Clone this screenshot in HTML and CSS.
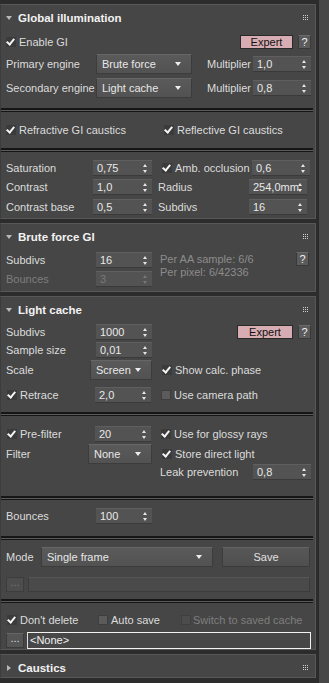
FILE: index.html
```html
<!DOCTYPE html>
<html>
<head>
<meta charset="utf-8">
<link rel="stylesheet" href="styles.css">
</head>
<body>
<div class="app">
  <div class="panel">
    <section class="rollout r1">
      <div class="rhead"><span class="tri"></span><span class="title">Global illumination</span><svg class="grip" width="5" height="5" viewBox="0 0 5 5"><g fill="#d0d0d0"><rect x="0" y="0" width="1" height="1"/><rect x="2" y="0" width="1" height="1"/><rect x="4" y="0" width="1" height="1"/><rect x="0" y="2" width="1" height="1"/><rect x="2" y="2" width="1" height="1"/><rect x="4" y="2" width="1" height="1"/><rect x="0" y="4" width="1" height="1"/><rect x="2" y="4" width="1" height="1"/><rect x="4" y="4" width="1" height="1"/></g></svg></div>
      <div class="row h16 mt5">
        <span class="chk on"></span><span class="txt w-en">Enable GI</span>
        <span class="btn expert e1">Expert</span><span class="btn q">?</span>
      </div>
      <div class="row h21 mt3">
        <span class="txt w90">Primary engine</span>
        <span class="dd w96">Brute force<i class="arr"></i></span>
        <span class="txt w46 ml15">Multiplier</span>
        <span class="sp w58">1,0<i class="spa"></i></span>
      </div>
      <div class="row h21 mt3">
        <span class="txt w90">Secondary engine</span>
        <span class="dd w96">Light cache<i class="arr"></i></span>
        <span class="txt w46 ml15">Multiplier</span>
        <span class="sp w58">0,8<i class="spa"></i></span>
      </div>
      <div class="sep s1"></div>
      <div class="row h16">
        <span class="chk on"></span><span class="txt w145">Refractive GI caustics</span>
        <span class="chk on"></span><span class="txt">Reflective GI caustics</span>
      </div>
      <div class="sep s2"></div>
      <div class="row h19">
        <span class="txt w87">Saturation</span>
        <span class="sp w59">0,75<i class="spa"></i></span>
        <span class="chk on ml10"></span><span class="txt w77">Amb. occlusion</span>
        <span class="sp w58">0,6<i class="spa"></i></span>
      </div>
      <div class="row h19">
        <span class="txt w87">Contrast</span>
        <span class="sp w59">1,0<i class="spa"></i></span>
        <span class="txt w91 ml6">Radius</span>
        <span class="sp w58">254,0mm<i class="spa"></i></span>
      </div>
      <div class="row h19 mt1">
        <span class="txt w87">Contrast base</span>
        <span class="sp w59">0,5<i class="spa"></i></span>
        <span class="txt w91 ml6">Subdivs</span>
        <span class="sp w58">16<i class="spa"></i></span>
      </div>
    </section>

    <section class="rollout r2">
      <div class="rhead"><span class="tri"></span><span class="title">Brute force GI</span><svg class="grip" width="5" height="5" viewBox="0 0 5 5"><g fill="#d0d0d0"><rect x="0" y="0" width="1" height="1"/><rect x="2" y="0" width="1" height="1"/><rect x="4" y="0" width="1" height="1"/><rect x="0" y="2" width="1" height="1"/><rect x="2" y="2" width="1" height="1"/><rect x="4" y="2" width="1" height="1"/><rect x="0" y="4" width="1" height="1"/><rect x="2" y="4" width="1" height="1"/><rect x="4" y="4" width="1" height="1"/></g></svg></div>
      <div class="bf mt3">
        <div class="bfl">
          <div class="row h17">
            <span class="txt w90">Subdivs</span>
            <span class="sp w56">16<i class="spa"></i></span>
          </div>
          <div class="row h17 mt2 dis">
            <span class="txt w90">Bounces</span>
            <span class="sp w56">3<i class="spa"></i></span>
          </div>
        </div>
        <div class="info">
          <div>Per AA sample: 6/6</div>
          <div>Per pixel: 6/42336</div>
        </div>
        <span class="btn q q2">?</span>
      </div>
    </section>

    <section class="rollout r3">
      <div class="rhead"><span class="tri"></span><span class="title">Light cache</span><svg class="grip" width="5" height="5" viewBox="0 0 5 5"><g fill="#d0d0d0"><rect x="0" y="0" width="1" height="1"/><rect x="2" y="0" width="1" height="1"/><rect x="4" y="0" width="1" height="1"/><rect x="0" y="2" width="1" height="1"/><rect x="2" y="2" width="1" height="1"/><rect x="4" y="2" width="1" height="1"/><rect x="0" y="4" width="1" height="1"/><rect x="2" y="4" width="1" height="1"/><rect x="4" y="4" width="1" height="1"/></g></svg></div>
      <div class="row h17 mt2">
        <span class="txt w90">Subdivs</span>
        <span class="sp w56">1000<i class="spa"></i></span>
        <span class="btn expert e2">Expert</span><span class="btn q">?</span>
      </div>
      <div class="row h17 mt1">
        <span class="txt w90">Sample size</span>
        <span class="sp w56">0,01<i class="spa"></i></span>
      </div>
      <div class="row h21 mt1">
        <span class="txt w84">Scale</span>
        <span class="dd w62">Screen<i class="arr"></i></span>
        <span class="chk on ml10"></span><span class="txt">Show calc. phase</span>
      </div>
      <div class="row h17 mt6">
        <span class="chk on ml1"></span><span class="txt w75">Retrace</span>
        <span class="sp w56">2,0<i class="spa"></i></span>
        <span class="chk off ml10"></span><span class="txt">Use camera path</span>
      </div>
      <div class="sep s3"></div>
      <div class="row h17">
        <span class="chk on ml1"></span><span class="txt w75">Pre-filter</span>
        <span class="sp w56">20<i class="spa"></i></span>
        <span class="chk on ml10"></span><span class="txt">Use for glossy rays</span>
      </div>
      <div class="row h19 mt2">
        <span class="txt w82">Filter</span>
        <span class="dd w64">None<i class="arr"></i></span>
        <span class="chk on ml10"></span><span class="txt">Store direct light</span>
      </div>
      <div class="row h17">
        <span class="txt w154"></span>
        <span class="txt w93">Leak prevention</span>
        <span class="sp w58">0,8<i class="spa"></i></span>
      </div>
      <div class="sep s4"></div>
      <div class="row h17">
        <span class="txt w90">Bounces</span>
        <span class="sp w56">100<i class="spa"></i></span>
      </div>
      <div class="sep s5"></div>
      <div class="row h20">
        <span class="txt w35">Mode</span>
        <span class="dd w172">Single frame<i class="arr"></i></span>
        <span class="btn save">Save</span>
      </div>
      <div class="row h15 mt10">
        <span class="btn dots dimb">...</span>
        <span class="field dimf"></span>
      </div>
      <div class="sep s6"></div>
      <div class="row h16">
        <span class="chk on ml1"></span><span class="txt w78">Don't delete</span>
        <span class="chk off"></span><span class="txt w70">Auto save</span>
        <span class="chk off dchk"></span><span class="txt dis">Switch to saved cache</span>
      </div>
      <div class="row h17 mt4">
        <span class="btn dots">...</span>
        <span class="field none">&lt;None&gt;</span>
      </div>
    </section>

    <section class="rollout r4 closed">
      <div class="rhead"><span class="tri right"></span><span class="title">Caustics</span><svg class="grip" width="5" height="5" viewBox="0 0 5 5"><g fill="#d0d0d0"><rect x="0" y="0" width="1" height="1"/><rect x="2" y="0" width="1" height="1"/><rect x="4" y="0" width="1" height="1"/><rect x="0" y="2" width="1" height="1"/><rect x="2" y="2" width="1" height="1"/><rect x="4" y="2" width="1" height="1"/><rect x="0" y="4" width="1" height="1"/><rect x="2" y="4" width="1" height="1"/><rect x="4" y="4" width="1" height="1"/></g></svg></div>
    </section>
  </div>
  <div class="scroll"></div>
</div>
</body>
</html>
```
FILE: styles.css
```css
* { box-sizing: border-box; }
html, body { margin: 0; padding: 0; }
body {
  background: #2b2b2b;
  width: 329px;
  height: 683px;
  overflow: hidden;
  font-family: "Liberation Sans", Arial, sans-serif;
  font-size: 11px;
  color: #dcdcdc;
}
.app { display: flex; height: 683px; }
.panel {
  width: 318px;
  background: #2c2c2c;
  padding: 4px 2px 0 0;
  display: flex;
  flex-direction: column;
  gap: 4px;
}
.scroll {
  width: 11px;
  background: #474747;
  border-left: 1px solid #2a2a2a;
}
.rollout {
  background: #464646;
  border: 1px solid #575757;
  border-left: 1px solid #3c3c3c;
  padding: 0 0 0 5px;
  flex: none;
}
.rhead {
  height: 24px;
  display: flex;
  align-items: center;
  position: relative;
  margin-left: -5px;
  padding-left: 5px;
  padding-top: 1px;
}
.tri {
  width: 0; height: 0;
  border-left: 3px solid transparent;
  border-right: 3px solid transparent;
  border-top: 4px solid #b8b8b8;
  margin-right: 6px;
}
.tri.right {
  border-top: 3px solid transparent;
  border-bottom: 3px solid transparent;
  border-left: 4px solid #b8b8b8;
  border-right: 0;
  margin-left: 1px;
  margin-right: 7px;
}
.title { font-weight: bold; font-size: 11.5px; color: #f2f2f2; }
.grip {
  position: absolute;
  right: 7px; top: 10px;
}
.row { display: flex; align-items: center; }
.h15 { height: 15px; } .h16 { height: 16px; } .h17 { height: 17px; }
.h19 { height: 19px; } .h20 { height: 20px; } .h21 { height: 21px; }
.mt1 { margin-top: 1px; } .mt2 { margin-top: 2px; } .mt3 { margin-top: 3px; } .mt4 { margin-top: 4px; }
.mt5 { margin-top: 5px; } .mt6 { margin-top: 6px; } .mt10 { margin-top: 10px; }
.ml1 { margin-left: 1px; } .ml6 { margin-left: 6px; } .ml10 { margin-left: 10px; } .ml15 { margin-left: 15px; }
.txt { white-space: nowrap; flex: none; }
.w35 { width: 35px; } .w46 { width: 46px; } .w56 { width: 56px; } .w58 { width: 58px; }
.w59 { width: 59px; } .w62 { width: 62px; } .w64 { width: 64px; } .w70 { width: 70px; }
.w75 { width: 75px; } .w77 { width: 77px; } .w78 { width: 78px; } .w82 { width: 82px; }
.w84 { width: 84px; } .w87 { width: 87px; } .w90 { width: 90px; } .w91 { width: 91px; }
.w93 { width: 93px; } .w96 { width: 96px; } .w145 { width: 145px; } .w154 { width: 154px; }
.w172 { width: 172px; } .w-en { width: 221px; }

.chk {
  width: 10px; height: 10px;
  flex: none;
  margin-right: 3px;
  position: relative;
}
.chk.on { background: #3b3b3b; }
.chk.on::after {
  content: "";
  position: absolute;
  left: 2px; top: 0px;
  width: 3px; height: 6px;
  border-right: 2px solid #f4f4f4;
  border-bottom: 2px solid #f4f4f4;
  transform: rotate(40deg);
}
.chk.off { background: #5b5b5b; border: 1px solid #3e3e3e; }
.chk.dchk { background: #4c4c4c; border: 1px solid #3f3f3f; margin-right: 2px; }
.dis { color: #7e7e7e; }

.sp, .dd {
  position: relative;
  flex: none;
  height: 16px;
  line-height: 15px;
  padding-left: 4px;
  background: #535353;
  border-top: 1px solid #5f5f5f;
  border-bottom: 1px solid #3a3a3a;
  color: #e8e8e8;
  overflow: hidden;
}
.dd {
  height: 20px;
  line-height: 18px;
  padding-left: 5px;
  background: linear-gradient(#5a5a5a, #525252);
  border: 1px solid #3c3c3c;
  border-top-color: #666;
}
.arr {
  position: absolute;
  right: 10px; top: 7px;
  width: 0; height: 0;
  border-left: 3px solid transparent;
  border-right: 3px solid transparent;
  border-top: 4px solid #eee;
}
.spa {
  position: absolute;
  right: 4px; top: 3px;
  width: 5px; height: 9px;
}
.spa::before, .spa::after {
  content: "";
  position: absolute;
  left: 0;
  border-left: 2.5px solid transparent;
  border-right: 2.5px solid transparent;
}
.spa::before { top: 0; border-bottom: 3px solid #e6e6e6; }
.spa::after { bottom: 0; border-top: 3px solid #e6e6e6; }
.dis .sp { color: #7a7a7a; }
.dis .spa::before { border-bottom-color: #777; }
.dis .spa::after { border-top-color: #777; }

.btn {
  flex: none;
  display: flex;
  align-items: center;
  justify-content: center;
}
.expert {
  width: 53px; height: 14px;
  background: #d7adb3;
  border: 1px solid #2a2a2a;
  color: #111;
  font-size: 11px;
}
.e2 { margin-left: 85px; width: 56px; }
.q {
  width: 13px; height: 14px;
  margin-left: 5px;
  background: #5b5b5b;
  border: 1px solid #3a3a3a;
  border-top-color: #6a6a6a;
  color: #f0f0f0;
  font-size: 11px;
}
.save {
  width: 88px; height: 20px;
  margin-left: 9px;
  background: linear-gradient(#575757, #4f4f4f);
  border: 1px solid #3b3b3b;
  border-top-color: #626262;
  color: #e0e0e0;
}
.dots {
  width: 18px; height: 15px;
  background: #555;
  border: 1px solid #3b3b3b;
  border-top-color: #666;
  color: #ddd;
  line-height: 1;
  align-items: flex-end;
  padding-bottom: 3px;
}
.dimb { background: #4d4d4d; color: #777; border-color: #3d3d3d; }
.field {
  flex: none;
  margin-left: 4px;
  width: 282px;
  height: 15px;
}
.dimf { background: #4a4a4a; border: 1px solid #3c3c3c; border-top-color: #555; }
.none {
  width: 284px;
  height: 17px;
  margin-left: 3px;
  background: #474747;
  border: 1px solid #f2f2f2;
  border-left-color: #dedede;
  line-height: 15px;
  padding-left: 2px;
  color: #f0f0f0;
}

.bf { display: flex; align-items: flex-start; }
.bfl { width: 151px; flex: none; }
.info {
  margin-left: 3px;
  margin-top: 2px;
  color: #8c8c8c;
  line-height: 13px;
  width: 136px;
}
.q2 { margin-left: 0; margin-top: 1px; }

.sep {
  height: 4px;
  margin-left: -5px;
  margin-right: 2px;
  border-top: 2px solid #161616;
  border-bottom: 1px solid #161616;
  background: #5a5a5a;
  flex: none;
}
.s1 { margin-top: 10px; margin-bottom: 10px; }
.s2 { margin-top: 10px; margin-bottom: 6px; }
.s3 { margin-top: 9px; margin-bottom: 9px; }
.s4 { margin-top: 16px; margin-bottom: 7px; }
.s5 { margin-top: 12px; margin-bottom: 7px; }
.s6 { margin-top: 7px; margin-bottom: 9px; }

.r1 { height: 215px; }
.r2 { height: 69px; }
.r3 { height: 354px; }
.r4 { height: 24px; }
```
